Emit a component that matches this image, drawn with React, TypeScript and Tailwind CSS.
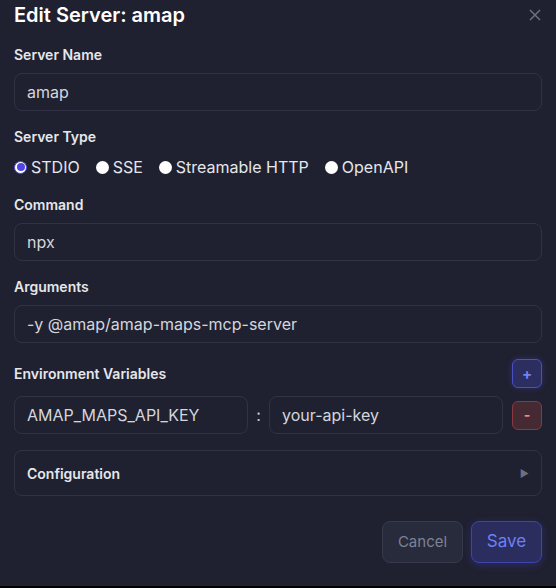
import * as React from "react";

const font = { fontFamily: "Inter, 'Noto Sans', sans-serif" };

function Label({ children }: { children: React.ReactNode }) {
  return <div className="mb-2 text-[14px] font-semibold leading-5 text-[#e5e7eb]">{children}</div>;
}

function TextInput({ value, className = "" }: { value: string; className?: string }) {
  return (
    <div
      className={
        "flex h-[38px] items-center rounded-lg border border-[#2f3344] bg-[#1f2130] px-3 text-[16px] text-[#d4d6dd] " +
        className
      }
    >
      {value}
    </div>
  );
}

function Radio({ label, checked }: { label: string; checked?: boolean }) {
  return (
    <label className="flex items-center gap-[4px]">
      {checked ? (
        <span className="flex h-[13px] w-[13px] items-center justify-center rounded-full border border-[#4f46e5] bg-white">
          <span className="h-[8px] w-[8px] rounded-full bg-[#4f46e5]" />
        </span>
      ) : (
        <span className="h-[13px] w-[13px] rounded-full bg-white" />
      )}
      <span className="text-[16px] text-[#e5e7eb]">{label}</span>
    </label>
  );
}

export default function App() {
  return (
    <div className="min-h-[588px] w-[556px] bg-black" style={font}>
      <div className="flex h-[586px] flex-col bg-[#1f2130] px-[14px]">
        {/* Header */}
        <div className="flex items-center justify-between pt-[1px]">
          <h2 className="text-[20px] font-semibold leading-7 text-white">Edit Server: amap</h2>
          <svg width="12" height="12" viewBox="0 0 12 12" className="mr-[1px] text-[#6b7080]">
            <path d="M1 1L11 11M11 1L1 11" stroke="currentColor" strokeWidth="1.5" />
          </svg>
        </div>

        <div className="mt-4 flex flex-col gap-4">
          <div>
            <Label>Server Name</Label>
            <TextInput value="amap" />
          </div>

          <div>
            <Label>Server Type</Label>
            <div className="flex items-center gap-4 pt-[2px] leading-5">
              <Radio label="STDIO" checked />
              <Radio label="SSE" />
              <Radio label="Streamable HTTP" />
              <Radio label="OpenAPI" />
            </div>
          </div>

          <div className="mt-[2px]">
            <Label>Command</Label>
            <TextInput value="npx" />
          </div>

          <div>
            <Label>Arguments</Label>
            <TextInput value="-y @amap/amap-maps-mcp-server" />
          </div>

          <div>
            <div className="mb-2 flex items-center justify-between">
              <span className="text-[14px] font-semibold leading-5 text-[#e5e7eb]">Environment Variables</span>
              <button className="flex h-[29px] w-[30px] items-center justify-center rounded-md border border-[#4a4fc2] bg-[#2b2e5e] text-[15px] font-bold leading-none text-[#7482f6] shadow-[0_0_6px_rgba(79,70,229,0.35)]">
                +
              </button>
            </div>
            <div className="flex items-center gap-2">
              <TextInput value="AMAP_MAPS_API_KEY" className="w-[234px]" />
              <span className="w-[5px] text-center text-[16px] text-[#c9ccd4]">:</span>
              <TextInput value="your-api-key" className="w-[234px]" />
              <button className="ml-[1px] flex h-[29px] w-[30px] items-center justify-center rounded-md border border-[#8a3a3e] bg-[#452a33] text-[14px] font-bold leading-none text-[#f08a8a]">
                -
              </button>
            </div>
          </div>

          <div className="flex h-[46px] items-center justify-between rounded-lg border border-[#2f3344] px-3">
            <span className="text-[14px] font-semibold text-[#e5e7eb]">Configuration</span>
            <span className="text-[10px] text-[#6b7080]">▶</span>
          </div>
        </div>

        <div className="mt-[25px] flex justify-end gap-2">
          <button className="h-[42px] w-[81px] rounded-lg border border-[#363a4c] bg-[#282b3b] text-[15px] text-[#7d8295]">
            Cancel
          </button>
          <button className="h-[42px] w-[71px] rounded-lg border border-[#3f44aa] bg-[#2a2d5e] text-[17px] text-[#6e80f5] shadow-[0_2px_8px_rgba(79,70,229,0.3)]">
            Save
          </button>
        </div>
      </div>
    </div>
  );
}
